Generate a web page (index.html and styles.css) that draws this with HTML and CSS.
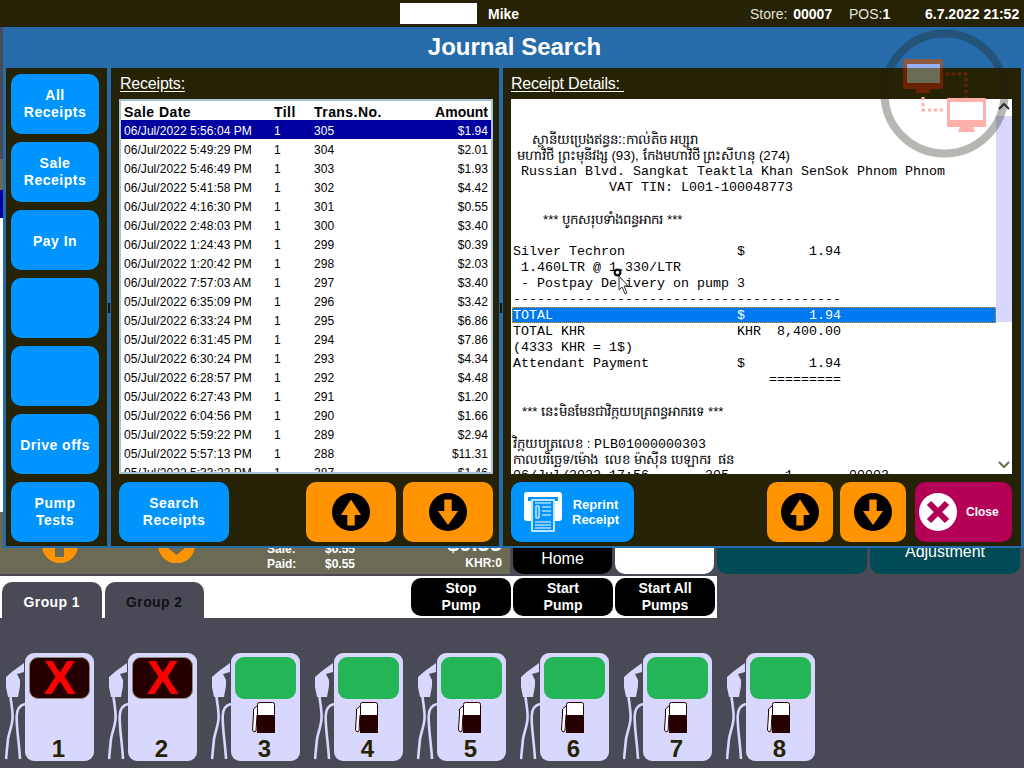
FILE: index.html
```html
<!DOCTYPE html>
<html lang="en">
<head>
  <meta charset="UTF-8">
  <title>Journal Search</title>
  <link rel="stylesheet" href="styles.css">
</head>
<body>

  <div class="topbar">
    <div class="user-box"></div>
    <b class="user">Mike</b>
    <span class="store">Store: <b>00007</b></span>
    <span class="pos">POS:<b>1</b></span>
    <b class="clock">6.7.2022 21:52</b>
  </div>

  <!-- screen behind the dialog -->
  <div class="under">
    <div class="strip strip-grey"></div>
    <div class="strip strip-olive"></div>
    <div class="strip strip-blue"></div>
    <div class="strip strip-white"></div>
    <div class="info-row">
      <div class="info">
        <svg class="info-arrow" width="36" height="36" viewBox="0 0 36 36">
          <circle cx="18" cy="18" r="18" fill="#ff9400"/>
          <rect x="13" y="0" width="9" height="30" fill="#6b6b55"/>
        </svg>
        <svg class="info-arrow second" width="37" height="36" viewBox="0 0 37 36">
          <circle cx="18.500" cy="18" r="18.500" fill="#ff9400"/>
          <path d="M1.500 14h34L18.500 28z" fill="#6b6b55"/>
        </svg>
        <div class="totals">
          <span>Sale:</span><span>$0.55</span>
          <span>Paid:</span><span>$0.55</span>
        </div>
        <div class="due">
          <b class="due-big">$0.55</b>
          <b>KHR:0</b>
        </div>
      </div>
      <div class="nav-btn black">Home</div>
      <div class="nav-btn white"></div>
      <div class="nav-btn teal wide"></div>
      <div class="nav-btn teal wide">Adjustment</div>
    </div>
  </div>

  <div class="group-row">
    <div class="tabs">
      <div class="tab">Group 1</div>
      <div class="tab off">Group 2</div>
    </div>
    <div class="pump-cmds">
      <div class="cmd">Stop<br>Pump</div>
      <div class="cmd">Start<br>Pump</div>
      <div class="cmd">Start All<br>Pumps</div>
    </div>
  </div>

  <div class="pumps">
    <div class="pump">
      <svg class="nozzle" width="21" height="98" viewBox="0 0 21 98"><use href="#nozzle"/></svg>
      <div class="pump-body">
        <div class="display down">X</div>
        <div class="pump-no">1</div>
      </div>
    </div>
    <div class="pump">
      <svg class="nozzle" width="21" height="98" viewBox="0 0 21 98"><use href="#nozzle"/></svg>
      <div class="pump-body">
        <div class="display down">X</div>
        <div class="pump-no">2</div>
      </div>
    </div>
    <div class="pump">
      <svg class="nozzle" width="21" height="98" viewBox="0 0 21 98"><use href="#nozzle"/></svg>
      <div class="pump-body">
        <div class="display"></div>
        <svg class="fuel" width="25" height="32" viewBox="0 0 25 32"><use href="#fuel"/></svg>
        <div class="pump-no">3</div>
      </div>
    </div>
    <div class="pump">
      <svg class="nozzle" width="21" height="98" viewBox="0 0 21 98"><use href="#nozzle"/></svg>
      <div class="pump-body">
        <div class="display"></div>
        <svg class="fuel" width="25" height="32" viewBox="0 0 25 32"><use href="#fuel"/></svg>
        <div class="pump-no">4</div>
      </div>
    </div>
    <div class="pump">
      <svg class="nozzle" width="21" height="98" viewBox="0 0 21 98"><use href="#nozzle"/></svg>
      <div class="pump-body">
        <div class="display"></div>
        <svg class="fuel" width="25" height="32" viewBox="0 0 25 32"><use href="#fuel"/></svg>
        <div class="pump-no">5</div>
      </div>
    </div>
    <div class="pump">
      <svg class="nozzle" width="21" height="98" viewBox="0 0 21 98"><use href="#nozzle"/></svg>
      <div class="pump-body">
        <div class="display"></div>
        <svg class="fuel" width="25" height="32" viewBox="0 0 25 32"><use href="#fuel"/></svg>
        <div class="pump-no">6</div>
      </div>
    </div>
    <div class="pump">
      <svg class="nozzle" width="21" height="98" viewBox="0 0 21 98"><use href="#nozzle"/></svg>
      <div class="pump-body">
        <div class="display"></div>
        <svg class="fuel" width="25" height="32" viewBox="0 0 25 32"><use href="#fuel"/></svg>
        <div class="pump-no">7</div>
      </div>
    </div>
    <div class="pump">
      <svg class="nozzle" width="21" height="98" viewBox="0 0 21 98"><use href="#nozzle"/></svg>
      <div class="pump-body">
        <div class="display"></div>
        <svg class="fuel" width="25" height="32" viewBox="0 0 25 32"><use href="#fuel"/></svg>
        <div class="pump-no">8</div>
      </div>
    </div>
  </div>

  <!-- dialog -->
  <div class="dialog">
    <h1 class="dialog-title">Journal Search</h1>
    <div class="panels">

      <div class="panel side">
        <div class="btn blue">All<br>Receipts</div>
        <div class="btn blue">Sale<br>Receipts</div>
        <div class="btn blue single">Pay In</div>
        <div class="btn blue"></div>
        <div class="btn blue"></div>
        <div class="btn blue single">Drive offs</div>
        <div class="btn blue">Pump<br>Tests</div>
      </div>

      <div class="panel receipts">
        <div class="panel-label">Receipts:</div>
        <div class="list-box">
          <table class="list">
            <thead>
              <tr><th class="c-date">Sale Date</th><th class="c-till">Till</th><th class="c-trans">Trans.No.</th><th class="c-amt">Amount</th></tr>
            </thead>
            <tbody>
              <tr class="sel"><td>06/Jul/2022 5:56:04 PM</td><td>1</td><td>305</td><td class="c-amt">$1.94</td></tr>
              <tr><td>06/Jul/2022 5:49:29 PM</td><td>1</td><td>304</td><td class="c-amt">$2.01</td></tr>
              <tr><td>06/Jul/2022 5:46:49 PM</td><td>1</td><td>303</td><td class="c-amt">$1.93</td></tr>
              <tr><td>06/Jul/2022 5:41:58 PM</td><td>1</td><td>302</td><td class="c-amt">$4.42</td></tr>
              <tr><td>06/Jul/2022 4:16:30 PM</td><td>1</td><td>301</td><td class="c-amt">$0.55</td></tr>
              <tr><td>06/Jul/2022 2:48:03 PM</td><td>1</td><td>300</td><td class="c-amt">$3.40</td></tr>
              <tr><td>06/Jul/2022 1:24:43 PM</td><td>1</td><td>299</td><td class="c-amt">$0.39</td></tr>
              <tr><td>06/Jul/2022 1:20:42 PM</td><td>1</td><td>298</td><td class="c-amt">$2.03</td></tr>
              <tr><td>06/Jul/2022 7:57:03 AM</td><td>1</td><td>297</td><td class="c-amt">$3.40</td></tr>
              <tr><td>05/Jul/2022 6:35:09 PM</td><td>1</td><td>296</td><td class="c-amt">$3.42</td></tr>
              <tr><td>05/Jul/2022 6:33:24 PM</td><td>1</td><td>295</td><td class="c-amt">$6.86</td></tr>
              <tr><td>05/Jul/2022 6:31:45 PM</td><td>1</td><td>294</td><td class="c-amt">$7.86</td></tr>
              <tr><td>05/Jul/2022 6:30:24 PM</td><td>1</td><td>293</td><td class="c-amt">$4.34</td></tr>
              <tr><td>05/Jul/2022 6:28:57 PM</td><td>1</td><td>292</td><td class="c-amt">$4.48</td></tr>
              <tr><td>05/Jul/2022 6:27:43 PM</td><td>1</td><td>291</td><td class="c-amt">$1.20</td></tr>
              <tr><td>05/Jul/2022 6:04:56 PM</td><td>1</td><td>290</td><td class="c-amt">$1.66</td></tr>
              <tr><td>05/Jul/2022 5:59:22 PM</td><td>1</td><td>289</td><td class="c-amt">$2.94</td></tr>
              <tr><td>05/Jul/2022 5:57:13 PM</td><td>1</td><td>288</td><td class="c-amt">$11.31</td></tr>
              <tr><td>05/Jul/2022 5:33:22 PM</td><td>1</td><td>287</td><td class="c-amt">$1.46</td></tr>
            </tbody>
          </table>
        </div>
        <div class="actions">
          <div class="btn blue search">Search<br>Receipts</div>
          <div class="spacer"></div>
          <div class="btn orange pager">
            <svg width="38" height="38" viewBox="0 0 38 38"><use href="#arrow-up"/></svg>
          </div>
          <div class="btn orange pager">
            <svg width="38" height="38" viewBox="0 0 38 38"><use href="#arrow-down"/></svg>
          </div>
        </div>
      </div>

      <div class="panel details">
        <div class="panel-label">Receipt Details:&nbsp;</div>
        <div class="receipt-box">
          <div class="receipt">
            <div class="ln"></div>
            <div class="ln"></div>
            <div class="ln km km-name">ស្ថានីយប្រេងឥន្ធនៈ:កាល់តិច អប្សរា</div>
            <div class="ln km km-addr">មហាវិថី ព្រះមុនីវង្ស (93), កែងមហាវិថី ព្រះសីហនុ (274)</div>
            <div class="ln"> Russian Blvd. Sangkat Teaktla Khan SenSok Phnom Phnom</div>
            <div class="ln">            VAT TIN: L001-100048773</div>
            <div class="ln"></div>
            <div class="ln km km-head">*** បូកសរុបទាំងពន្ធអាករ ***</div>
            <div class="ln"></div>
            <div class="ln">Silver Techron              $        1.94</div>
            <div class="ln"> 1.460LTR @ 1.330/LTR</div>
            <div class="ln"> - Postpay Delivery on pump 3</div>
            <div class="ln">-----------------------------------------</div>
            <div class="ln focus">TOTAL                       $        1.94</div>
            <div class="ln">TOTAL KHR                   KHR  8,400.00</div>
            <div class="ln">(4333 KHR = 1$)</div>
            <div class="ln">Attendant Payment           $        1.94</div>
            <div class="ln">                                =========</div>
            <div class="ln"></div>
            <div class="ln km km-note">*** នេះមិនមែនជាវិក្កយបត្រពន្ធអាករទេ ***</div>
            <div class="ln"></div>
            <div class="ln"><span class="km">វិក្កយបត្រលេខ : </span>PLB01000000303</div>
            <div class="ln km">កាលបរិច្ឆេទ/ម៉ោង  លេខ ម៉ាស៊ីន បេឡាករ  ផន</div>
            <div class="ln">06/Jul/2022 17:56       305       1       00003</div>
          </div>
          <div class="scrollbar">
            <svg class="sb-btn" width="16" height="17" viewBox="0 0 16 17"><path d="M3 10l5-5 5 5" fill="none" stroke="#333" stroke-width="2"/></svg>
            <div class="sb-track"></div>
            <div class="sb-rest"></div>
            <svg class="sb-btn" width="16" height="17" viewBox="0 0 16 17"><path d="M3 5l5 5 5-5" fill="none" stroke="#6b6b55" stroke-width="2"/></svg>
          </div>
        </div>
        <div class="actions">
          <div class="btn blue reprint">
            <svg width="40" height="40" viewBox="0 0 40 40">
              <rect x="0" y="0" width="38" height="29" rx="3" fill="#fff"/>
              <rect x="4" y="5" width="30" height="4" fill="#0094ff"/>
              <rect x="7" y="7" width="24" height="32" fill="#0094ff"/>
              <rect x="8" y="8" width="22" height="31" fill="none" stroke="#fff" stroke-width="1.500"/>
              <path d="M11 11h16M11 30h16M11 33h16M11 36h16M18 15h9M18 19h9M18 23h9M12 14v12M15 14v12M12 14h3M12 26h3" stroke="#fff" stroke-width="1.200" fill="none"/>
            </svg>
            <span>Reprint<br>Receipt</span>
          </div>
          <div class="spacer"></div>
          <div class="btn orange pager small">
            <svg width="38" height="38" viewBox="0 0 38 38"><use href="#arrow-up"/></svg>
          </div>
          <div class="btn orange pager small">
            <svg width="38" height="38" viewBox="0 0 38 38"><use href="#arrow-down"/></svg>
          </div>
          <div class="btn close">
            <svg width="38" height="38" viewBox="0 0 38 38">
              <circle cx="19" cy="19" r="19" fill="#fff"/>
              <path d="M10 10l18 18M28 10L10 28" stroke="#b30056" stroke-width="6"/>
            </svg>
            <span>Close</span>
          </div>
        </div>
      </div>
    </div>
    <div class="grip grip-a"></div>
    <div class="grip grip-b"></div>
  </div>

  <!-- remote desktop badge, sits over everything -->
  <svg class="remote" width="132" height="132" viewBox="0 0 132 132">
    <circle cx="66.500" cy="65.500" r="60" fill="none" stroke="rgb(32,32,20)" stroke-opacity=".33" stroke-width="8"/>
    <rect x="25" y="31" width="40" height="30" rx="2" fill="#6b2200"/>
    <path d="M25 40v-7a2 2 0 0 1 2-2h36a2 2 0 0 1 2 2v7z" fill="#8a5a40"/>
    <rect x="29" y="36" width="33" height="4" fill="#96aef5"/>
    <rect x="29" y="40" width="33" height="15" fill="#6b6b55"/>
    <path d="M39 61h12l2 4H37z" fill="#6b2200"/>
    <path d="M68 46h20v24" fill="none" stroke="#6b2200" stroke-width="3" stroke-dasharray="3 3"/>
    <path d="M45 69v13h22" fill="none" stroke="#ffb0a8" stroke-width="3" stroke-dasharray="3 3"/>
    <rect x="69" y="70" width="39" height="29" rx="1" fill="#ffb0a8"/>
    <rect x="72" y="74" width="33" height="18" fill="#fff"/>
    <path d="M82 99h13l2 5H80z" fill="#ffb0a8"/>
  </svg>

  <svg class="cursor" width="18" height="28" viewBox="0 0 18 28">
    <circle cx="4.500" cy="4.500" r="2.800" fill="none" stroke="#111" stroke-width="2.200"/>
    <path d="M6 8v14l3-3 3 7 2-1-3-7h4z" fill="#fff" stroke="#333" stroke-width="1"/>
  </svg>

  <svg class="defs" width="0" height="0">
    <defs>
      <g id="arrow-up">
        <circle cx="19" cy="19" r="19" fill="#000"/>
        <path d="M19 6.500L29 22h-6.300v10.500h-7.400V22H9z" fill="#ff9400"/>
      </g>
      <g id="arrow-down">
        <circle cx="19" cy="19" r="19" fill="#000"/>
        <path d="M19 32L29 18h-6.300V6.500h-7.400V18H9z" fill="#ff9400"/>
      </g>
      <g id="nozzle">
        <path d="M19 1L8 9l-7 6v10l2 10h10l2-11v-6l-3-6 7-2z" fill="#d8d8ff"/>
        <path d="M5.500 35c1 8 2.500 15 2 22-.5 7-3 12-4.500 20L1 97" fill="none" stroke="#d8d8ff" stroke-width="2.600"/>
        <path d="M20 42c-5 1-8 5-8.300 12-.3 13 2.300 25 3.300 43" fill="none" stroke="#d8d8ff" stroke-width="2.600"/>
      </g>
      <g id="fuel">
        <rect x="6.500" y="0.500" width="17" height="30" rx="2" fill="#fff" stroke="#260000"/>
        <rect x="6" y="13" width="18" height="18" fill="#260000"/>
        <path d="M6 4L2.500 7v5L1.500 28 3 30l2-1 1-16" fill="#fff" stroke="#260000" stroke-width="1"/>
      </g>
    </defs>
  </svg>

</body>
</html>
```
FILE: styles.css
```css
* {
  box-sizing: border-box;
}

html, body {
  margin: 0;
  padding: 0;
}

body {
  position: relative;
  width: 1024px;
  height: 768px;
  overflow: hidden;
  background-color: #4a4a57;
  font-family: 'Liberation Sans', Arial, sans-serif;
  color: #fff;
}

.topbar {
  display: flex;
  align-items: center;
  height: 27px;
  background-color: #262205;
  font-size: 14px;
}

.user-box {
  width: 77px;
  height: 21px;
  margin-left: 400px;
  background-color: #fff;
}

.user {
  margin-left: 11px;
  width: 262px;
}

.store {
  width: 99px;
  color: #e4e4d8;
  word-spacing: 2px;
}

.store b, .pos b {
  color: #fff;
}

.pos {
  width: 76px;
  color: #e4e4d8;
}

/* behind the dialog */
.under {
  position: relative;
  height: 549px;
}

.strip {
  width: 3px;
}

.strip-grey { height: 132px; background-color: #4a4a57; }
.strip-olive { height: 31px; background-color: #6b6b55; }
.strip-blue { height: 28px; background-color: #0000a0; }
.strip-white { height: 294px; background-color: #fff; }

.info-row {
  display: flex;
  gap: 3px;
  height: 62px;
}

.info {
  position: relative;
  width: 510px;
  padding-top: 26px;
  background-color: #6b6b55;
  font-size: 12px;
  font-weight: bold;
}

.info-arrow {
  position: absolute;
  left: 42px;
  top: 15px;
}

.info-arrow.second {
  left: 158px;
}

.totals {
  position: absolute;
  left: 267px;
  top: 30px;
  display: grid;
  grid-template-columns: 58px 50px;
  line-height: 15px;
}

.due {
  position: absolute;
  right: 8px;
  top: 25px;
  display: flex;
  flex-direction: column;
  align-items: flex-end;
  line-height: 17px;
}

.due-big {
  margin-bottom: 4px;
  font-size: 22px;
  line-height: 14px;
}

.nav-btn {
  display: flex;
  align-items: flex-end;
  justify-content: center;
  width: 99px;
  padding-bottom: 6px;
  border-radius: 0 0 10px 10px;
  font-size: 16px;
  line-height: 18px;
}

.nav-btn.black { background-color: #000; }
.nav-btn.white { background-color: #fff; }
.nav-btn.teal { background-color: #004a55; }

.nav-btn.wide {
  width: 150px;
  padding-bottom: 13px;
}

.group-row {
  display: flex;
  justify-content: space-between;
  width: 717px;
  height: 42px;
  background-color: #fff;
}

.tabs {
  display: flex;
  align-items: flex-end;
  gap: 3px;
  padding-left: 2px;
}

.tab {
  width: 99.500px;
  height: 36px;
  padding-top: 12px;
  border-radius: 10px 10px 0 0;
  background-color: #4a4a57;
  font-size: 14px;
  font-weight: bold;
  letter-spacing: .4px;
  text-align: center;
}

.tab.off {
  color: #111;
}

.pump-cmds {
  display: flex;
  gap: 2px;
  padding: 2px 2px 2px 0;
}

.cmd {
  display: flex;
  align-items: center;
  justify-content: center;
  width: 100px;
  border-radius: 10px;
  background-color: #000;
  font-size: 14px;
  font-weight: bold;
  line-height: 17px;
  text-align: center;
}

.pumps {
  display: flex;
  gap: 3px;
  padding: 35px 0 0 5px;
}

.pump {
  display: flex;
  align-items: flex-end;
  width: 100px;
  height: 108px;
}

.nozzle {
  flex: none;
  margin-bottom: 1px;
}

.pump-body {
  position: relative;
  display: flex;
  flex-direction: column;
  align-items: center;
  flex: none;
  width: 69px;
  height: 108px;
  margin-left: -1px;
  padding-top: 4px;
  border-radius: 9px;
  background-color: #d8d8ff;
}

.display {
  width: 61px;
  height: 42px;
  border-radius: 9px;
  background-color: #24b557;
}

.display.down {
  border: 1px solid #8a8a78;
  background-color: #260000;
  color: #ff0000;
  font-size: 48px;
  font-weight: bold;
  line-height: 40px;
  text-align: center;
}

.fuel {
  position: absolute;
  left: 20px;
  top: 49px;
}

.pump-no {
  position: absolute;
  left: 0;
  right: 2px;
  bottom: 0;
  color: #262205;
  font-size: 24px;
  font-weight: bold;
  line-height: 24px;
  text-align: center;
}

/* dialog */
.dialog {
  position: absolute;
  left: 3px;
  top: 27px;
  width: 1021px;
  height: 521px;
  background-color: #266cab;
}

.dialog-title {
  height: 41px;
  margin: 0;
  font-size: 24px;
  line-height: 40px;
  text-align: center;
  transform: translateX(1px);
}

.panels {
  display: flex;
  gap: 4px;
  height: 478px;
  padding: 0 3px;
}

.panel {
  background-color: #262205;
}

.side {
  display: flex;
  flex-direction: column;
  gap: 8px;
  width: 101px;
  padding: 6px 8px 0 5px;
}

.receipts {
  width: 388px;
  padding: 0 6px 0 8px;
}

.details {
  width: 518px;
  padding: 0 9px 0 8px;
}

.panel-label {
  height: 31px;
  padding-top: 6px;
  font-size: 16px;
  font-weight: normal;
  line-height: 19px;
  letter-spacing: -.2px;
  text-decoration: underline;
  text-underline-offset: 2px;
}

.receipts .panel-label {
  padding-left: 1px;
}

.btn {
  display: flex;
  align-items: center;
  justify-content: center;
  flex: none;
  height: 60px;
  border-radius: 10px;
  font-size: 14px;
  font-weight: bold;
  line-height: 17px;
  letter-spacing: .5px;
  text-align: center;
}

.btn.single {
  padding-top: 2px;
}

.blue { background-color: #0094ff; }
.orange { background-color: #ff9400; }

.list-box {
  height: 375px;
  overflow: hidden;
  border: 2px solid #a8c4d8;
  background-color: #fff;
}

.list {
  width: 100%;
  border-collapse: collapse;
  table-layout: fixed;
  color: #000;
  font-size: 12px;
}

.list th {
  height: 19px;
  padding: 2px 0 0 3px;
  font-size: 14px;
  letter-spacing: .45px;
  text-align: left;
}

.list th.c-amt {
  letter-spacing: 0;
}

.list td {
  height: 19px;
  padding: 3px 0 0 3px;
  line-height: 16px;
  white-space: nowrap;
  letter-spacing: .05px;
}

.list .c-date { width: 150px; }
.list .c-till { width: 40px; }
.list .c-trans { width: 106px; }

.list th.c-amt, .list td.c-amt {
  padding-right: 3px;
  text-align: right;
}

.list .sel td {
  background-color: #0000a0;
  color: #fff;
}

.actions {
  display: flex;
  gap: 7px;
  margin-top: 8px;
}

.spacer {
  flex: 1;
}

.search {
  width: 110px;
}

.pager {
  width: 90px;
}

.pager.small {
  width: 66px;
}

.receipt-box {
  display: flex;
  height: 375px;
  overflow: hidden;
  background-color: #fff;
}

.receipt {
  flex: 1;
  height: 375px;
  padding-left: 2px;
  overflow: hidden;
  color: #000;
  font-family: 'Liberation Mono', 'Courier New', monospace;
  font-size: 13.333px;
  line-height: 18px;
}

.ln {
  height: 16px;
  white-space: pre;
}

.km {
  font-family: 'Liberation Sans', Arial, sans-serif;
}

.km-name { padding-left: 19px; }
.km-addr { padding-left: 4px; }
.km-head { padding-left: 30px; }
.km-note { padding-left: 9px; }

.focus {
  margin-left: -1px;
  padding-left: 1px;
  outline: 1px dotted #ff9400;
  outline-offset: -1px;
  background-color: #0078f0;
  color: #fff;
}

.scrollbar {
  display: flex;
  flex-direction: column;
  flex: none;
  width: 16px;
}

.sb-btn {
  flex: none;
}

.sb-track {
  height: 206px;
  background-color: #d8d8ff;
}

.sb-rest {
  flex: 1;
}

.reprint {
  justify-content: flex-start;
  width: 123px;
  gap: 8px;
  padding-left: 13px;
  font-size: 13px;
  line-height: 15px;
  letter-spacing: 0;
}

.close {
  justify-content: flex-start;
  width: 97px;
  margin-left: 2px;
  padding-left: 4px;
  background-color: #b30056;
  font-size: 12px;
  letter-spacing: 0;
}

.close span {
  margin-left: 9px;
}

.grip {
  position: absolute;
  top: 276px;
  width: 2px;
  height: 10px;
  background-color: #111;
}

.grip-a { left: 105px; }
.grip-b { left: 497px; }

.remote {
  position: absolute;
  left: 878px;
  top: 28px;
}

.cursor {
  position: absolute;
  left: 613px;
  top: 268px;
}

.defs {
  position: absolute;
}
```
